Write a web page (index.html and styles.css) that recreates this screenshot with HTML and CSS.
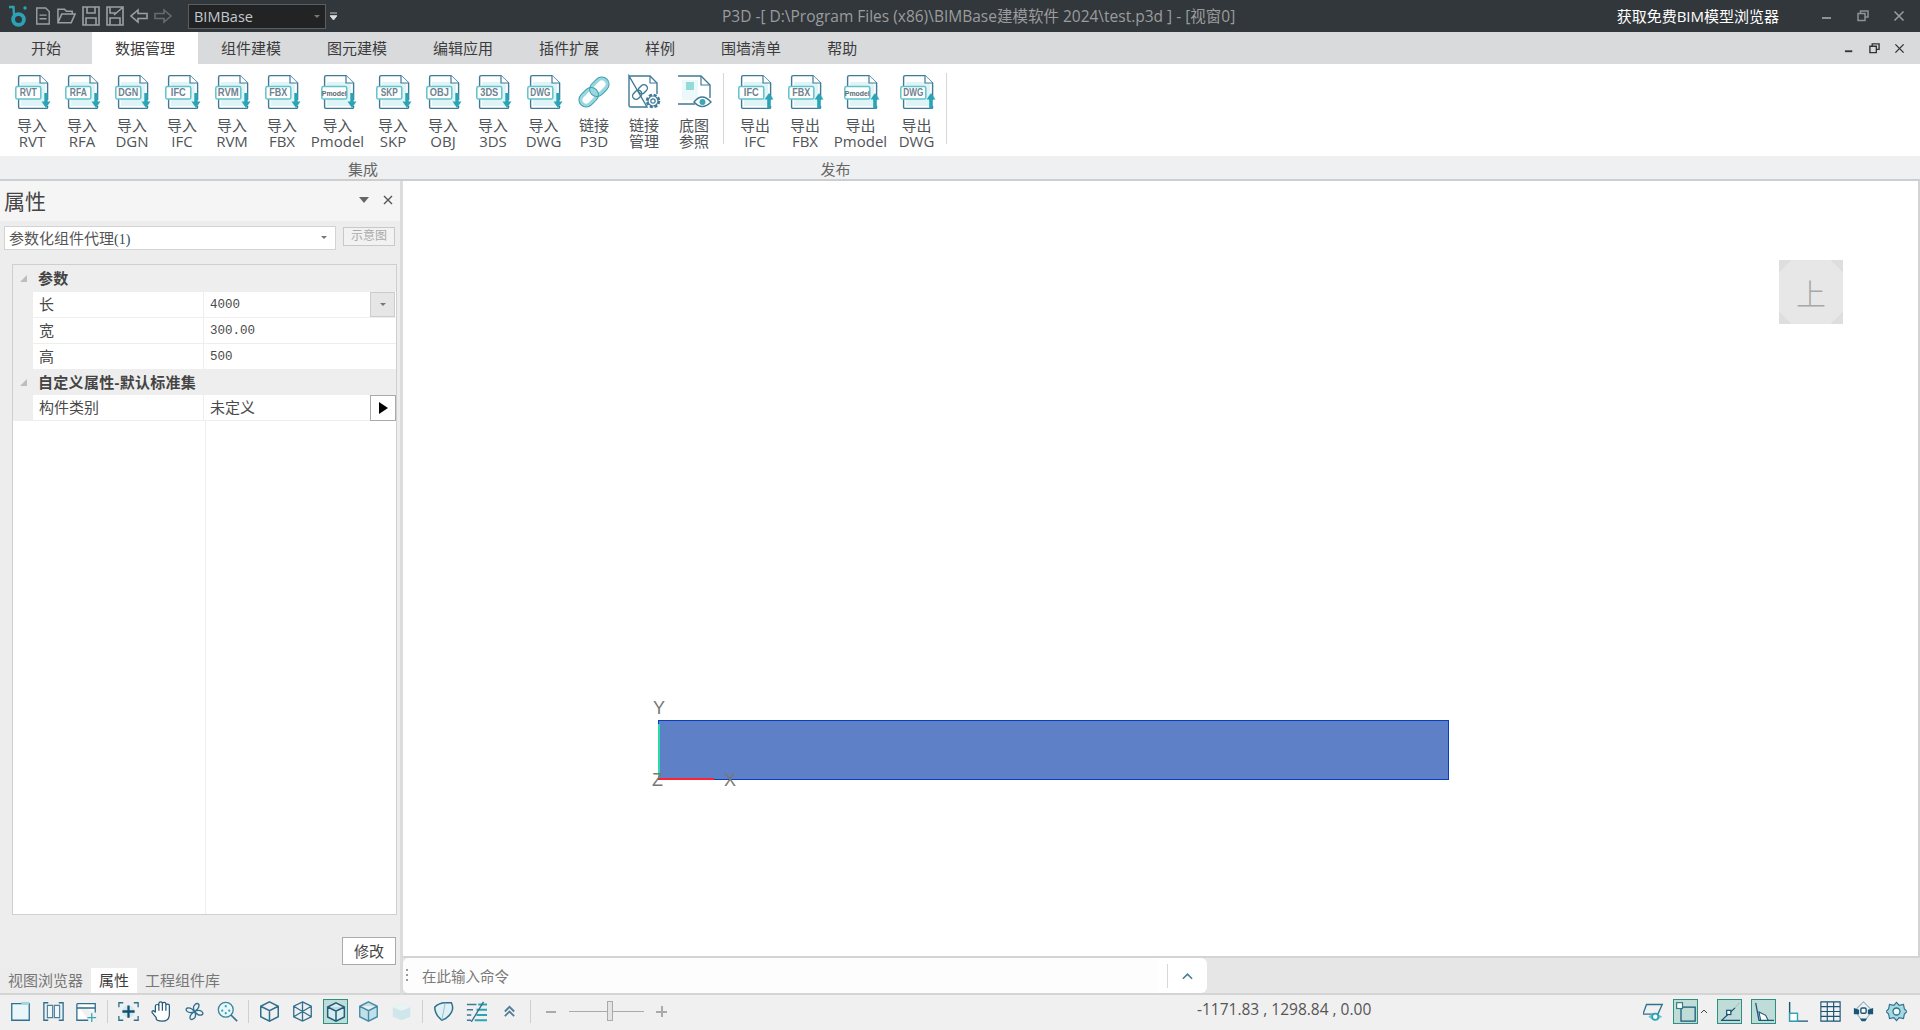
FILE: index.html
```html
<!DOCTYPE html>
<html lang="zh">
<head>
<meta charset="utf-8">
<title>P3D</title>
<link rel="stylesheet" href="styles.css">
</head>
<body>
<svg class="defs" width="0" height="0">
  <defs>
    <symbol id="filebase" viewBox="0 0 36 36">
      <path d="M6 8H30V32H6Z" fill="#def4f6"/>
      <path d="M3.600 13V3.200Q3.600 1.600 5.200 1.600H25L32.600 9V26M32.600 32V33.200Q32.600 34.400 31.400 34.400H5.200Q3.600 34.400 3.600 33.200V25" fill="none" stroke="#3f7a97" stroke-width="1.400"/>
      <path d="M25 1.600V9H32.600" fill="#fff" stroke="#3f7a97" stroke-width="1.200"/>
      <rect x="0.800" y="12.600" width="25" height="12.400" rx="1.600" fill="#fff" stroke="#62c3cb" stroke-width="1.500"/>
    </symbol>
    <symbol id="fin" viewBox="0 0 36 36">
      <use href="#filebase" width="36" height="36"/>
      <path d="M29.300 19H32.700V27.500H35.500L31 34L26.500 27.500H29.300Z" fill="#2ba5b6"/>
    </symbol>
    <symbol id="fout" viewBox="0 0 36 36">
      <use href="#filebase" width="36" height="36"/>
      <path d="M31 19L35.500 25.500H32.800V34.500H29.200V25.500H26.500Z" fill="#2ba5b6"/>
    </symbol>
    <symbol id="chain" viewBox="0 0 36 36">
      <g transform="rotate(-45 18 18)" fill="none">
        <rect x="1.500" y="12.500" width="18" height="11" rx="5.500" stroke="#9bd7de" stroke-width="3.600"/>
        <rect x="16.500" y="12.500" width="18" height="11" rx="5.500" stroke="#9bd7de" stroke-width="3.600"/>
        <rect x="-0.300" y="10.700" width="21.600" height="14.600" rx="7.300" stroke="#3b9fb2" stroke-width="1"/>
        <rect x="14.700" y="10.700" width="21.600" height="14.600" rx="7.300" stroke="#3b9fb2" stroke-width="1"/>
      </g>
    </symbol>
    <symbol id="linkmgr" viewBox="0 0 36 36">
      <path d="M2 2H23L30 9V20M20 33H4Q2 33 2 31V2Z" fill="#fff" stroke="#3f7a97" stroke-width="1.400"/>
      <path d="M23 2V9H30" fill="none" stroke="#3f7a97" stroke-width="1.200"/>
      <g transform="rotate(-45 13 18)" fill="none" stroke="#3f7a97" stroke-width="1.400">
        <rect x="4" y="14.500" width="10" height="7" rx="3.500"/>
        <rect x="12" y="14.500" width="10" height="7" rx="3.500"/>
      </g>
      <circle cx="26" cy="27" r="6" fill="#fff" stroke="#3f7a97" stroke-width="2.600" stroke-dasharray="3 1.700"/>
      <circle cx="26" cy="27" r="5" fill="#fff" stroke="#3f7a97" stroke-width="1.200"/>
      <circle cx="26" cy="27" r="2.200" fill="none" stroke="#3f7a97" stroke-width="1.200"/>
    </symbol>
    <symbol id="underlay" viewBox="0 0 36 36">
      <path d="M1 2H24L33 11V24M18 30H1Z" fill="#fff" stroke="#3f7a97" stroke-width="1.400"/>
      <path d="M24 2V11H33" fill="none" stroke="#3f7a97" stroke-width="1.200"/>
      <path d="M5 6H21V26H5Z" fill="#dff3f5" opacity=".6"/>
      <rect x="9" y="8" width="8" height="8" fill="#93dbd9"/>
      <path d="M17 28Q25 18 34 28Q25 37 17 28Z" fill="#fff" stroke="#3f7a97" stroke-width="1.400"/>
      <circle cx="25.500" cy="28" r="3" fill="#3ba7b7"/>
    </symbol>
  </defs>
</svg>

<header class="titlebar">
  <div class="qat">
    <svg class="logo" viewBox="0 0 20 22"><circle cx="10.500" cy="14.500" r="5.400" fill="none" stroke="#2aa3b4" stroke-width="3.800"/><path d="M1 2H5.500L6 10" fill="none" stroke="#2aa3b4" stroke-width="2.400"/><circle cx="17" cy="3" r="1.700" fill="#2aa3b4"/></svg>
    <svg class="qi q1" viewBox="0 0 18 20"><path d="M2 1H12L16 5V19H2Z M5 9H13M5 13H13" fill="none" stroke="#9aa0a4" stroke-width="1.600"/></svg>
    <svg class="qi q2" viewBox="0 0 20 20"><path d="M1 17V3H8L10 5H16V8M1 17L5 8H19L15 17Z" fill="none" stroke="#9aa0a4" stroke-width="1.600"/></svg>
    <svg class="qi q3" viewBox="0 0 18 20"><path d="M1 1H17V19H1Z M5 1V7H13V1M4 19V12H14V19" fill="none" stroke="#9aa0a4" stroke-width="1.600"/></svg>
    <svg class="qi q4" viewBox="0 0 18 20"><path d="M1 1H17V19H1Z M4 1V7H10M4 19V12H14V19M8 9L16 2" fill="none" stroke="#9aa0a4" stroke-width="1.600"/></svg>
    <svg class="qi q5" viewBox="0 0 18 16"><path d="M8 2L1 8L8 14V10.500H17V5.500H8Z" fill="none" stroke="#9aa0a4" stroke-width="1.600"/></svg>
    <svg class="qi q6" viewBox="0 0 18 16"><path d="M10 2L17 8L10 14V10.500H1V5.500H10Z" fill="none" stroke="#666b6f" stroke-width="1.600"/></svg>
    <div class="combo-dark"><span>BIMBase</span><i class="tri-dark"></i></div>
    <svg class="qmore" viewBox="0 0 8 10"><path d="M0 1H8M0 4H8L4 9Z" stroke="#ddd" fill="#ddd"/></svg>
  </div>
  <div class="title">P3D -[ D:\Program Files (x86)\BIMBase建模软件 2024\test.p3d ] - [视窗0]</div>
  <div class="getfree">获取免费BIM模型浏览器</div>
  <div class="winbtns">
    <svg class="wb" viewBox="0 0 12 12"><path d="M1 8H10" stroke="#8d9296" stroke-width="2"/></svg>
    <svg class="wb" viewBox="0 0 12 12"><path d="M3.500 3V1H11V7H8.500M1 3.500H8V10.500H1Z" fill="none" stroke="#8d9296" stroke-width="1.500"/></svg>
    <svg class="wb" viewBox="0 0 12 12"><path d="M1.500 1.500L10.500 10.500M10.500 1.500L1.500 10.500" stroke="#9a9ea2" stroke-width="1.500"/></svg>
  </div>
</header>

<nav class="tabs">
  <a class="tab first">开始</a>
  <a class="tab active">数据管理</a>
  <a class="tab">组件建模</a>
  <a class="tab">图元建模</a>
  <a class="tab">编辑应用</a>
  <a class="tab">插件扩展</a>
  <a class="tab">样例</a>
  <a class="tab">围墙清单</a>
  <a class="tab">帮助</a>
  <div class="mdibtns">
    <svg class="mb" viewBox="0 0 12 12"><path d="M1 9H9" stroke="#333" stroke-width="2"/></svg>
    <svg class="mb" viewBox="0 0 12 12"><path d="M3.500 3V1H11V7H8.500M1 3.500H8V10.500H1Z" fill="none" stroke="#333" stroke-width="1.500"/></svg>
    <svg class="mb" viewBox="0 0 12 12"><path d="M1.500 1.500L10.500 10.500M10.500 1.500L1.500 10.500" stroke="#333" stroke-width="1.500"/></svg>
  </div>
</nav>

<section class="ribbon">
  <div class="rbtn"><svg class="ri" viewBox="0 0 36 36"><use href="#fin"/><text x="13.300" y="22.300" class="ft" textLength="17" lengthAdjust="spacingAndGlyphs">RVT</text></svg><span class="l">导入</span><span class="l">RVT</span></div>
  <div class="rbtn"><svg class="ri" viewBox="0 0 36 36"><use href="#fin"/><text x="13.300" y="22.300" class="ft" textLength="17" lengthAdjust="spacingAndGlyphs">RFA</text></svg><span class="l">导入</span><span class="l">RFA</span></div>
  <div class="rbtn"><svg class="ri" viewBox="0 0 36 36"><use href="#fin"/><text x="13.300" y="22.300" class="ft" textLength="20" lengthAdjust="spacingAndGlyphs">DGN</text></svg><span class="l">导入</span><span class="l">DGN</span></div>
  <div class="rbtn"><svg class="ri" viewBox="0 0 36 36"><use href="#fin"/><text x="13.300" y="22.300" class="ft" textLength="15" lengthAdjust="spacingAndGlyphs">IFC</text></svg><span class="l">导入</span><span class="l">IFC</span></div>
  <div class="rbtn"><svg class="ri" viewBox="0 0 36 36"><use href="#fin"/><text x="13.300" y="22.300" class="ft" textLength="21" lengthAdjust="spacingAndGlyphs">RVM</text></svg><span class="l">导入</span><span class="l">RVM</span></div>
  <div class="rbtn"><svg class="ri" viewBox="0 0 36 36"><use href="#fin"/><text x="13.300" y="22.300" class="ft" textLength="18" lengthAdjust="spacingAndGlyphs">FBX</text></svg><span class="l">导入</span><span class="l">FBX</span></div>
  <div class="rbtn wide"><svg class="ri" viewBox="0 0 36 36"><use href="#fin"/><text x="13.300" y="21.500" class="ft small" textLength="25" lengthAdjust="spacingAndGlyphs">Pmodel</text></svg><span class="l">导入</span><span class="l">Pmodel</span></div>
  <div class="rbtn"><svg class="ri" viewBox="0 0 36 36"><use href="#fin"/><text x="13.300" y="22.300" class="ft" textLength="17" lengthAdjust="spacingAndGlyphs">SKP</text></svg><span class="l">导入</span><span class="l">SKP</span></div>
  <div class="rbtn"><svg class="ri" viewBox="0 0 36 36"><use href="#fin"/><text x="13.300" y="22.300" class="ft" textLength="19" lengthAdjust="spacingAndGlyphs">OBJ</text></svg><span class="l">导入</span><span class="l">OBJ</span></div>
  <div class="rbtn"><svg class="ri" viewBox="0 0 36 36"><use href="#fin"/><text x="13.300" y="22.300" class="ft" textLength="18" lengthAdjust="spacingAndGlyphs">3DS</text></svg><span class="l">导入</span><span class="l">3DS</span></div>
  <div class="rbtn w51"><svg class="ri" viewBox="0 0 36 36"><use href="#fin"/><text x="13.300" y="22.300" class="ft" textLength="20" lengthAdjust="spacingAndGlyphs">DWG</text></svg><span class="l">导入</span><span class="l">DWG</span></div>
  <div class="rbtn"><svg class="ri chainicon" viewBox="0 0 36 36"><use href="#chain"/></svg><span class="l">链接</span><span class="l">P3D</span></div>
  <div class="rbtn"><svg class="ri" viewBox="0 0 36 36"><use href="#linkmgr"/></svg><span class="l">链接</span><span class="l">管理</span></div>
  <div class="rbtn"><svg class="ri" viewBox="0 0 36 36"><use href="#underlay"/></svg><span class="l">底图</span><span class="l">参照</span></div>
  <div class="rsep first"></div>
  <div class="rbtn"><svg class="ri" viewBox="0 0 36 36"><use href="#fout"/><text x="13.300" y="22.300" class="ft" textLength="15" lengthAdjust="spacingAndGlyphs">IFC</text></svg><span class="l">导出</span><span class="l">IFC</span></div>
  <div class="rbtn"><svg class="ri" viewBox="0 0 36 36"><use href="#fout"/><text x="13.300" y="22.300" class="ft" textLength="18" lengthAdjust="spacingAndGlyphs">FBX</text></svg><span class="l">导出</span><span class="l">FBX</span></div>
  <div class="rbtn wide"><svg class="ri" viewBox="0 0 36 36"><use href="#fout"/><text x="13.300" y="21.500" class="ft small" textLength="25" lengthAdjust="spacingAndGlyphs">Pmodel</text></svg><span class="l">导出</span><span class="l">Pmodel</span></div>
  <div class="rbtn w51"><svg class="ri" viewBox="0 0 36 36"><use href="#fout"/><text x="13.300" y="22.300" class="ft" textLength="20" lengthAdjust="spacingAndGlyphs">DWG</text></svg><span class="l">导出</span><span class="l">DWG</span></div>
  <div class="rsep"></div>
</section>
<div class="grouprow">
  <span class="g1">集成</span>
  <span class="g2">发布</span>
</div>

<main class="workspace">
  <aside class="panel">
    <div class="panel-head">
      <span class="panel-title">属性</span>
      <i class="tri-panel"></i>
      <svg class="panel-x" viewBox="0 0 10 10"><path d="M1 1L9 9M9 1L1 9" stroke="#555" stroke-width="1.400"/></svg>
    </div>
    <div class="panel-body">
      <div class="selrow">
        <div class="combo"><span>参数化组件代理<em>(1)</em></span><i class="tri-small"></i></div>
        <div class="preview">示意图</div>
      </div>
      <div class="grid">
        <div class="row group"><i class="expand"></i><b>参数</b></div>
        <div class="row prop"><span class="name">长</span><span class="val num">4000</span><span class="dd"><i class="tri-small"></i></span></div>
        <div class="row prop"><span class="name">宽</span><span class="val num">300.00</span></div>
        <div class="row prop"><span class="name">高</span><span class="val num">500</span></div>
        <div class="row group short"><i class="expand"></i><b>自定义属性-默认标准集</b></div>
        <div class="row prop"><span class="name">构件类别</span><span class="val cjk">未定义</span><span class="play"><i></i></span></div>
        <div class="grid-rest"></div>
      </div>
      <div class="modrow"><button class="modify">修改</button></div>
      <div class="paneltabs">
        <span class="ptab">视图浏览器</span>
        <span class="ptab on">属性</span>
        <span class="ptab">工程组件库</span>
      </div>
    </div>
  </aside>
  <div class="mainarea">
    <div class="viewport">
      <div class="cube"><span>上</span></div>
      <div class="beam"></div>
      <div class="axis-y"></div>
      <div class="axis-x"></div>
      <span class="lbl ly">Y</span>
      <span class="lbl lz">Z</span>
      <span class="lbl lx">X</span>
    </div>
    <div class="cmdbar">
      <div class="cmdwrap">
        <div class="cmdinput"><i class="grip"></i><span>在此输入命令</span></div>
        <i class="cmdsep"></i>
        <div class="cmdup"><svg viewBox="0 0 12 8"><path d="M1 7L6 2L11 7" fill="none" stroke="#4a7f96" stroke-width="1.800"/></svg></div>
      </div>
    </div>
  </div>
</main>

<footer class="status">
  <div class="st"><svg viewBox="0 0 24 24"><path d="M2 3H22V22H2Z" fill="#eaf7fa" stroke="#2f6f8f" stroke-width="1.500"/><path d="M13 1H22V4H13Z" fill="#9fd8e0"/></svg></div>
  <div class="st"><svg viewBox="0 0 24 24"><path d="M6 2H1V22H6M18 2H23V22H18" fill="none" stroke="#2f6f8f" stroke-width="1.500"/><path d="M5 5H11V19H5ZM13 5H19V19H13Z" fill="#eef8fa" stroke="#4d7f98" stroke-width="1.300"/></svg></div>
  <div class="st"><svg viewBox="0 0 24 24"><path d="M1 3H22V13M14 22H1V3M1 8H22" fill="#fff" stroke="#2f6f8f" stroke-width="1.500"/><path d="M18 14V24M13 19H23" stroke="#39a9b5" stroke-width="1.500"/></svg></div>
  <i class="stsep"></i>
  <div class="st"><svg viewBox="0 0 24 24"><path d="M6 2H1V7M18 2H23V7M6 22H1V17M18 22H23V17" fill="none" stroke="#2f6f8f" stroke-width="1.500"/><circle cx="12" cy="12" r="7" fill="#cfeaf0"/><path d="M12 5V19M5 12H19" stroke="#17506f" stroke-width="2.600"/></svg></div>
  <div class="st"><svg viewBox="0 0 24 24"><path d="M5 13V6Q5 4 7 4T9 6V11V3Q9 1 11 1T13 3V11V3Q13 1.500 15 1.500T17 3V11V5Q17 3.500 19 3.500T21 5V15Q21 23 13 23T6 19L1 13Q1 11 3 11L5 13" fill="#fff" stroke="#23587a" stroke-width="1.400"/></svg></div>
  <div class="st"><svg viewBox="0 0 24 24"><path d="M12 12C8 4 16 1 17 4C18 8 12 12 12 12C20 8 24 15 20 16C16 17 12 12 12 12C16 20 8 23 7 20C6 16 12 12 12 12C4 16 0 9 4 8C8 7 12 12 12 12Z" fill="none" stroke="#2f6f8f" stroke-width="1.500"/></svg></div>
  <div class="st"><svg viewBox="0 0 24 24"><circle cx="10" cy="10" r="8.500" fill="#eaf7fa" stroke="#3a87a0" stroke-width="1.500"/><circle cx="10" cy="6" r="1.300" fill="#3aa6b5"/><circle cx="6" cy="11" r="1.300" fill="#3aa6b5"/><circle cx="14" cy="11" r="1.300" fill="#3aa6b5"/><circle cx="10" cy="14" r="1.300" fill="#3aa6b5"/><path d="M16 16L23 23" stroke="#2f6f8f" stroke-width="1.800"/></svg></div>
  <i class="stsep"></i>
  <div class="st"><svg viewBox="0 0 24 24"><path d="M12 1L22 6V18L12 23L2 18V6ZM2 6L12 11L22 6M12 11V23" fill="none" stroke="#2f6f8f" stroke-width="1.700"/></svg></div>
  <div class="st"><svg viewBox="0 0 24 24"><path d="M12 1L22 6V18L12 23L2 18V6ZM2 6L22 18M22 6L2 18M12 1V23" fill="none" stroke="#2f6f8f" stroke-width="1.500"/></svg></div>
  <div class="st cell"><div class="on-box"><svg viewBox="0 0 24 24"><path d="M12 1L22 6V18L12 23L2 18V6ZM2 6L12 11L22 6M12 11V23" fill="#d6ecef" stroke="#235c7c" stroke-width="1.800"/></svg></div></div>
  <div class="st"><svg viewBox="0 0 24 24"><path d="M12 1L22 6V18L12 23L2 18V6ZM2 6L12 11L22 6M12 11V23" fill="#bfe2ea" stroke="#4a8aa5" stroke-width="1.600"/></svg></div>
  <div class="st"><svg viewBox="0 0 24 24"><path d="M12 3L22 7V18L12 22L2 18V7Z" fill="#cfe6ea"/><path d="M2 7L12 11L22 7L12 3Z" fill="#e8f3f5"/></svg></div>
  <i class="stsep"></i>
  <div class="st"><svg viewBox="0 0 24 24"><path d="M2 7Q7 2 14 2H21Q24 8 21 13Q17 20 10 22Q2 15 2 7Z" fill="#e0f0f4" stroke="#2f6f8f" stroke-width="1.700"/><path d="M14 2L10 22" stroke="#8dbccc" stroke-width="1"/></svg></div>
  <div class="st"><svg viewBox="0 0 24 24"><path d="M1 4H12M1 10H8M1 16H6M1 22H6" stroke="#3f7a97" stroke-width="1.600"/><path d="M14 4H24M12 10H24M12 16H24M10 22H24" stroke="#2ba5b6" stroke-width="2.200"/><path d="M20 1L6 24" stroke="#2f6f8f" stroke-width="1.500"/></svg></div>
  <div class="st"><svg class="chev" viewBox="0 0 14 14"><path d="M2 7L7 2L12 7M2 12L7 7L12 12" fill="none" stroke="#4f7f9a" stroke-width="2"/></svg></div>
  <i class="stsep"></i>
  <div class="zoomer">
    <i class="z-minus"></i>
    <div class="z-track"><i class="z-thumb"></i></div>
    <span class="z-plus"></span>
  </div>
  <div class="coords">-1171.83 , 1298.84 , 0.00</div>
  <div class="stright">
    <div class="st narrow"><svg viewBox="0 0 24 24"><path d="M4 4H22L17 15H0Z" fill="none" stroke="#2f6f8f" stroke-width="1.500"/><path d="M6 18Q13 10 22 18Q13 25 6 18Z" fill="#72c6cf"/><circle cx="14" cy="18" r="3.500" fill="#fff" stroke="#2aa3b4" stroke-width="2"/></svg></div>
    <div class="on-box"><svg viewBox="0 0 24 24"><path d="M6 6H23V23H6Z" fill="none" stroke="#1a5577" stroke-width="1.500"/><rect x="0.800" y="0.800" width="7" height="7" fill="#fff" stroke="#2b7f80" stroke-width="1.400"/></svg></div>
    <svg class="mini-chev" viewBox="0 0 8 5"><path d="M1 4L4 1L7 4" fill="none" stroke="#444"/></svg>
    <div class="on-box gapl"><svg viewBox="0 0 24 24"><path d="M1 22H24M2 22L18 7" stroke="#1a5577" stroke-width="1.500"/><path d="M18 7L23 1" stroke="#8aa" stroke-width="1" stroke-dasharray="2 1"/><rect x="8" y="10" width="5" height="5" fill="#fff" stroke="#1a5577" stroke-width="1.500"/></svg></div>
    <div class="on-box gapm"><svg viewBox="0 0 24 24"><path d="M2 1L6 22H24" fill="none" stroke="#1a5577" stroke-width="1.500" stroke-dasharray="24 2"/><path d="M6 12L14 16L17 22H8Z" fill="#fff" stroke="#1a5577" stroke-width="1.300"/></svg></div>
    <div class="st first-plain"><svg viewBox="0 0 24 24"><path d="M3 1V23H24" fill="none" stroke="#1a5577" stroke-width="1.600"/><rect x="3" y="14" width="9" height="9" fill="#fff" stroke="#2aa3b4" stroke-width="1.600"/></svg></div>
    <div class="st"><svg viewBox="0 0 24 24"><path d="M1 1H23V23H1ZM8.300 1V23M15.600 1V23M1 6.500H23M1 12H23M1 17.500H23" fill="none" stroke="#1a5577" stroke-width="1.300"/></svg></div>
    <div class="st"><svg viewBox="0 0 24 24"><path d="M12 1L22 11L14 22H10L2 11Z" fill="none" stroke="#9ab6c4" stroke-width="1.300"/><path d="M1 8L7 10V15L1 15ZM23 8L17 10V15L23 15ZM8 20H16L14 23H10Z" fill="#1a5577"/><rect x="9" y="8" width="6" height="6" rx="1.500" fill="#fff" stroke="#1a5577" stroke-width="1.600"/></svg></div>
    <div class="st"><svg viewBox="0 0 24 24"><path d="M12 1.500L15 5L20 4L21 9L24 12L21 15L20 20L15 19L12 22.500L9 19L4 20L3 15L0 12L3 9L4 4L9 5Z" fill="#a5dbe0" stroke="#2f6f8f" stroke-width="1.300"/><circle cx="12" cy="12" r="4" fill="#eef9fa" stroke="#2f6f8f" stroke-width="1.500"/></svg></div>
  </div>
</footer>
</body>
</html>
```

FILE: styles.css
```css
* { box-sizing: border-box; }
html, body { margin: 0; padding: 0; }
body {
  width: 1920px;
  height: 1030px;
  overflow: hidden;
  display: flex;
  flex-direction: column;
  background: #f0f0f0;
  color: #444;
  font-family: "Open Sans", "Noto Sans CJK SC", sans-serif;
  font-size: 15px;
}
.defs { position: absolute; }
i { display: block; }

/* title bar */
.titlebar {
  height: 32px;
  flex: none;
  display: flex;
  align-items: center;
  background: #32373b;
}
.qat {
  width: 722px;
  flex: none;
  display: flex;
  align-items: center;
}
.logo { width: 20px; height: 22px; margin-left: 8px; flex: none; }
.qi { flex: none; height: 20px; }
.q1 { width: 16px; margin-left: 7px; }
.q2 { width: 19px; margin-left: 6px; }
.q3 { width: 18px; margin-left: 6px; }
.q4 { width: 18px; margin-left: 6px; }
.q5 { width: 18px; height: 16px; margin-left: 6px; }
.q6 { width: 18px; height: 16px; margin-left: 6px; }
.combo-dark {
  width: 138px;
  height: 25px;
  margin-left: 16px;
  padding-left: 5px;
  display: flex;
  align-items: center;
  justify-content: space-between;
  background: #212325;
  border: 1px solid #5a5e61;
  color: #c4c8cb;
  font-size: 14.500px;
}
.tri-dark {
  width: 0;
  height: 0;
  margin-right: 5px;
  border-left: 3px solid transparent;
  border-right: 3px solid transparent;
  border-top: 3px solid #777;
}
.qmore { width: 7px; height: 9px; margin-left: 4px; flex: none; }
.title { color: #9a9c9e; font-size: 15.500px; white-space: nowrap; padding-bottom: 1px; }
.getfree {
  margin-left: auto;
  color: #fff;
  font-size: 15px;
  white-space: nowrap;
  padding: 0 1px 1px 0;
}
.winbtns {
  width: 140px;
  flex: none;
  display: flex;
  align-items: center;
  padding-left: 41px;
  gap: 24px;
}
.wb { width: 12px; height: 12px; flex: none; }

/* tabs */
.tabs {
  height: 32px;
  flex: none;
  display: flex;
  align-items: stretch;
  background: #d9dadc;
}
.tab {
  padding: 0 23px 2px;
  display: flex;
  align-items: center;
  color: #3c3c3c;
  font-size: 15px;
}
.tab.first { padding: 0 31px 2px; }
.tab.active { background: #fff; }
.mdibtns {
  margin-left: auto;
  padding-right: 15px;
  display: flex;
  align-items: center;
  gap: 14px;
}
.mb { width: 11px; height: 11px; }

/* ribbon */
.ribbon {
  height: 92px;
  flex: none;
  padding: 9px 0 0 7px;
  display: flex;
  align-items: flex-start;
  background: #fff;
}
.rbtn {
  width: 50px;
  flex: none;
  display: flex;
  flex-direction: column;
  align-items: center;
}
.rbtn.wide { width: 61px; }
.rbtn.w51 { width: 51px; }
.ri { width: 36px; height: 36px; display: block; margin: 1px 0 7px 2px; flex: none; }
.ri.chainicon { margin-left: 0; }
.l {
  display: block;
  height: 16px;
  line-height: 16px;
  font-size: 15px;
  color: #4f5458;
  text-align: center;
  white-space: nowrap;
}
.ft {
  font-family: "Liberation Sans", sans-serif;
  font-size: 11px;
  font-weight: 700;
  fill: #6f8290;
  text-anchor: middle;
}
.ft.small { font-size: 8px; fill: #5a6a74; }
.rsep {
  width: 1px;
  height: 71px;
  margin-left: 4px;
  background: #d5d6d7;
  flex: none;
}
.rsep.first { margin: 0 6px 0 4px; }
.grouprow {
  height: 25px;
  flex: none;
  padding: 1px 0 0 7px;
  display: flex;
  align-items: center;
  background: #eef0f1;
  border-bottom: 2px solid #ccced0;
  color: #666;
  font-size: 15px;
}
.g1 { width: 712px; text-align: center; }
.g2 { width: 211px; margin-left: 11px; text-align: center; }

/* workspace */
.workspace {
  flex: 1;
  min-height: 0;
  display: flex;
}
.panel {
  width: 403px;
  flex: none;
  display: flex;
  flex-direction: column;
  background: #ededed;
  border-right: 3px solid #dcdcdc;
}
.panel-head {
  height: 40px;
  flex: none;
  display: flex;
  align-items: center;
  padding: 0 7px 3px 4px;
  background: #f5f5f5;
}
.panel-title { font-size: 21px; color: #444; }
.tri-panel {
  margin-left: auto;
  width: 0;
  height: 0;
  border-left: 5px solid transparent;
  border-right: 5px solid transparent;
  border-top: 6px solid #666;
}
.panel-x { width: 10px; height: 10px; margin-left: 14px; }
.panel-body {
  flex: 1;
  min-height: 0;
  display: flex;
  flex-direction: column;
}
.selrow {
  height: 24px;
  margin-top: 5px;
  flex: none;
  display: flex;
  padding-left: 4px;
}
.combo {
  width: 332px;
  padding: 0 8px 2px 4px;
  display: flex;
  align-items: center;
  justify-content: space-between;
  background: #fff;
  border: 1px solid #d3d3d3;
  color: #555;
  font-size: 15px;
}
.combo em { font-style: normal; font-size: 14px; font-family: "Liberation Serif", serif; color: #33475a; }
.tri-small {
  width: 0;
  height: 0;
  border-left: 3px solid transparent;
  border-right: 3px solid transparent;
  border-top: 3px solid #777;
}
.preview {
  width: 52px;
  height: 19px;
  margin: 1px 0 0 7px;
  text-align: center;
  line-height: 16px;
  font-size: 12px;
  color: #aaa;
  border: 1px solid #c8c8c8;
  background: #f2f2f2;
}
.grid {
  flex: 1;
  min-height: 0;
  margin: 14px 3px 0 12px;
  display: flex;
  flex-direction: column;
  background: #fff;
  border: 1px solid #cfcfcf;
}
.row {
  height: 26px;
  flex: none;
  display: flex;
  align-items: center;
  position: relative;
}
.group { background: #eeeeee; height: 27px; }
.group.short { height: 25px; }
.group b {
  margin-left: 11px;
  padding-bottom: 3px;
  font-size: 15px;
  font-weight: 700;
  color: #444;
  white-space: nowrap;
  letter-spacing: .3px;
}
.expand {
  width: 0;
  height: 0;
  margin-left: 7px;
  border-left: 7px solid transparent;
  border-bottom: 7px solid #bdbdbd;
}
.prop {
  border-left: 20px solid #eeeeee;
  border-bottom: 1px solid #eeeeee;
  background: #fff;
  color: #4a4a4a;
  font-size: 15px;
}
.name {
  width: 171px;
  height: 100%;
  padding: 0 0 3px 6px;
  display: flex;
  align-items: center;
  flex: none;
  border-right: 1px solid #eeeeee;
}
.val { padding-left: 6px; }
.val.cjk { padding-bottom: 3px; }
.val.num { font-family: "Liberation Mono", monospace; font-size: 12.500px; }
.dd {
  position: absolute;
  right: 1px;
  top: 0;
  width: 25px;
  height: 25px;
  display: flex;
  align-items: center;
  justify-content: center;
  background: #e6e6e6;
  border: 1px solid #ccc;
}
.play {
  position: absolute;
  right: 0;
  top: 0;
  width: 26px;
  height: 26px;
  display: flex;
  align-items: center;
  justify-content: center;
  background: #fff;
  border: 1px solid #aaa;
}
.play i {
  width: 0;
  height: 0;
  border-top: 6px solid transparent;
  border-bottom: 6px solid transparent;
  border-left: 9px solid #000;
}
.grid-rest { flex: 1; margin-left: 192px; border-left: 1px solid #eeeeee; }
.modrow {
  height: 53px;
  flex: none;
  display: flex;
  justify-content: flex-end;
  align-items: flex-start;
  padding: 22px 4px 0 0;
}
.modify {
  width: 54px;
  height: 28px;
  padding: 0 0 2px;
  background: #fff;
  border: 1px solid #aaa;
  font: 15px "Noto Sans CJK SC", sans-serif;
  color: #444;
}
.paneltabs {
  height: 27px;
  flex: none;
  display: flex;
  align-items: stretch;
  background: #ececec;
  border-bottom: 2px solid #d4d4d4;
}
.ptab {
  padding: 0 8px 2px;
  display: flex;
  align-items: center;
  font-size: 15px;
  color: #777;
}
.ptab.on { background: #fff; color: #3c3c3c; }

/* main */
.mainarea {
  flex: 1;
  min-width: 0;
  display: flex;
  flex-direction: column;
}
.viewport {
  flex: 1;
  position: relative;
  background: #fff;
  border-right: 2px solid #d4d4d4;
  border-bottom: 2px solid #d4d4d4;
}
.cube {
  position: absolute;
  left: 1376px;
  top: 79px;
  width: 64px;
  height: 64px;
  display: flex;
  align-items: center;
  justify-content: center;
  background:
    linear-gradient(135deg, #dedede 9px, transparent 9px),
    linear-gradient(225deg, #dedede 9px, transparent 9px),
    linear-gradient(45deg, #dedede 9px, transparent 9px),
    linear-gradient(315deg, #dedede 9px, transparent 9px),
    #e7e7e7;
  color: #a8a8a8;
  font-size: 30px;
  font-weight: 300;
}
.beam {
  position: absolute;
  left: 255px;
  top: 539px;
  width: 791px;
  height: 60px;
  background: #5e80c7;
  border: 1px solid #0a3cc0;
}
.axis-y {
  position: absolute;
  left: 255px;
  top: 543px;
  width: 2px;
  height: 55px;
  background: #2bdca9;
}
.axis-x {
  position: absolute;
  left: 255px;
  top: 597px;
  width: 56px;
  height: 2px;
  background: #ff2233;
}
.lbl {
  position: absolute;
  font-family: "Liberation Sans", sans-serif;
  font-size: 18px;
  line-height: 18px;
  color: #777;
}
.ly { left: 250px; top: 518px; }
.lz { left: 249px; top: 590px; }
.lx { left: 321px; top: 590px; }

.cmdbar {
  height: 37px;
  flex: none;
  display: flex;
  align-items: stretch;
  background: #e6e6e6;
  border-bottom: 2px solid #d4d4d4;
}
.cmdwrap {
  width: 804px;
  display: flex;
  align-items: center;
  background: #fff;
  border-radius: 6px;
}
.cmdinput {
  width: 755px;
  height: 100%;
  display: flex;
  align-items: center;
  background: #fdfdfd;
  border-radius: 6px 0 0 6px;
  color: #7a7a7a;
  font-size: 14.500px;
}
.grip {
  width: 2px;
  height: 13px;
  margin: 0 14px 0 3px;
  background: repeating-linear-gradient(#999 0 2px, transparent 2px 5px);
}
.cmdsep {
  width: 1px;
  height: 24px;
  margin-left: 9px;
  background: #d8d8d8;
  flex: none;
}
.cmdup {
  flex: 1;
  display: flex;
  align-items: center;
  justify-content: center;
}
.cmdup svg { width: 11px; height: 8px; }

/* status bar */
.status {
  height: 35px;
  flex: none;
  display: flex;
  align-items: center;
  padding: 0 0 2px 4px;
  background: #f0f0f0;
}
.st {
  width: 33px;
  height: 25px;
  flex: none;
  display: flex;
  align-items: center;
  justify-content: center;
}
.st svg { width: 21px; height: 21px; }
.st svg.chev { width: 13px; height: 13px; }
.on-box {
  width: 25px;
  height: 25px;
  flex: none;
  display: flex;
  align-items: center;
  justify-content: center;
  background: #bfdcd8;
  border: 1px solid #2f9080;
}
.on-box svg { width: 20px; height: 20px; }
.stsep {
  width: 1px;
  height: 23px;
  margin: 0 4px;
  background: #cfcfcf;
  flex: none;
}
.zoomer {
  margin-left: 11px;
  display: flex;
  align-items: center;
  flex: none;
}
.z-minus { width: 10px; height: 2px; background: #aaa; }
.z-track {
  width: 75px;
  height: 1px;
  margin: 0 12px 0 13px;
  background: #aaa;
  position: relative;
}
.z-thumb {
  position: absolute;
  left: 38px;
  top: -10px;
  width: 6px;
  height: 20px;
  background: #e4e4e4;
  border: 1px solid #aaa;
}
.z-plus {
  width: 11px;
  height: 11px;
  background:
    linear-gradient(#aaa, #aaa) center / 11px 2px no-repeat,
    linear-gradient(#aaa, #aaa) center / 2px 11px no-repeat;
}
.coords {
  margin-left: 530px;
  padding-bottom: 5px;
  font-size: 15.500px;
  color: #555;
  white-space: nowrap;
  flex: none;
}
.stright {
  margin-left: auto;
  padding-right: 7px;
  display: flex;
  align-items: center;
}
.st.narrow { width: 21px; margin-right: 9px; }
.mini-chev { width: 8px; height: 5px; margin-left: 2px; flex: none; }
.on-box.gapl { margin-left: 9px; }
.on-box.gapm { margin-left: 9px; }
.st.first-plain { margin-left: 5px; }
```
